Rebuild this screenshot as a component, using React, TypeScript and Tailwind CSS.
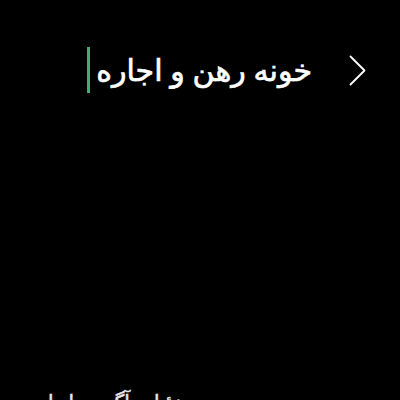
export default function App() {
  return (
    <div
      className="h-[400px] w-[400px] overflow-hidden bg-black text-white"
      style={{ fontFamily: '"Noto Sans", "DejaVu Sans", sans-serif' }}
    >
      <div dir="rtl" className="flex items-center pt-[46px] pr-[34px]">
        <button className="flex h-[48px] w-[17px] items-center justify-center text-white">
          <svg width="17" height="31" viewBox="0 0 17 31" fill="none">
            <polyline
              points="1.5,1.5 15.5,15.5 1.5,29.5"
              stroke="white"
              strokeWidth="1.8"
              strokeLinecap="round"
              strokeLinejoin="round"
            />
          </svg>
        </button>
        <div className="mr-[37px] flex items-center">
          <span className="text-[30px] leading-[48px] [-webkit-text-stroke:0.7px_white]">خونه رهن و اجاره</span>
          <span className="mr-[6px] h-[46px] w-[3px] bg-[#3fae6f]" />
        </div>
      </div>
      <div dir="rtl" className="mt-[294px] w-[195px] text-[20px] leading-[28px] text-gray-200 [-webkit-text-stroke:0.5px_#e5e7eb]">
        جزئیات آگهی را وارد کنید
      </div>
    </div>
  )
}
